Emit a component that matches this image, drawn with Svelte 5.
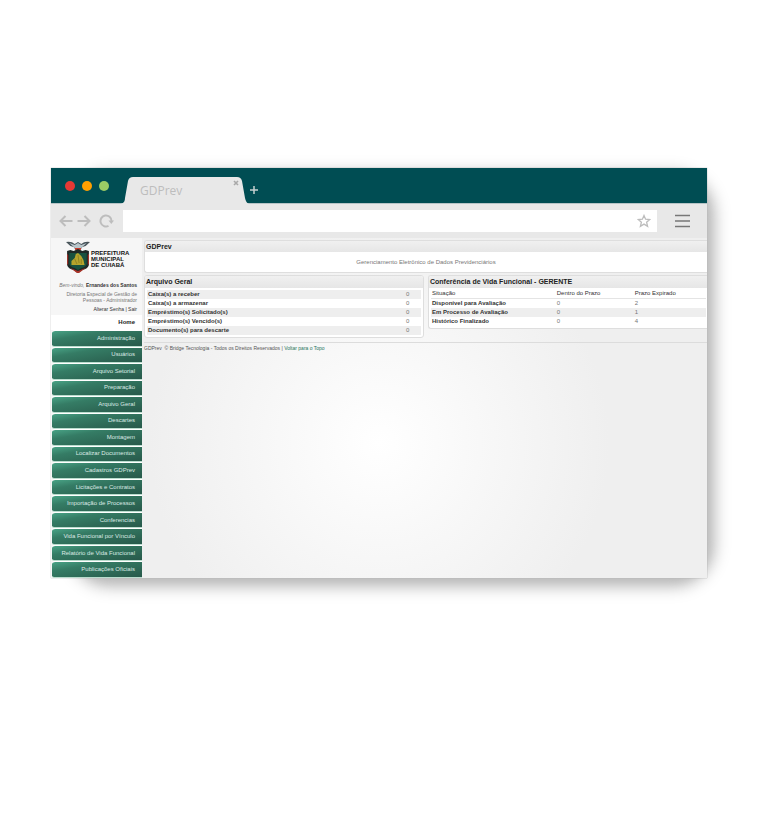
<script>
  const menu = ['Administração', 'Usuários', 'Arquivo Setorial', 'Preparação', 'Arquivo Geral', 'Descartes', 'Montagem', 'Localizar Documentos', 'Cadastros GDPrev', 'Licitações e Contratos', 'Importação de Processos', 'Conferencias', 'Vida Funcional por Vínculo', 'Relatório de Vida Funcional', 'Publicações Oficiais'];
  const files = [
    ['Caixa(s) a receber', 0],
    ['Caixa(s) a armazenar', 0],
    ['Empréstimo(s) Solicitado(s)', 0],
    ['Empréstimo(s) Vencido(s)', 0],
    ['Documento(s) para descarte', 0]
  ];
  const checks = [
    ['Disponível para Avaliação', 0, 2],
    ['Em Processo de Avaliação', 0, 1],
    ['Histórico Finalizado', 0, 4]
  ];
</script>

<div class="stage">
  <div class="window">
    <header class="titlebar">
      <div class="lights"><i class="red"></i><i class="orange"></i><i class="green"></i></div>
      <div class="tab">
        <svg class="shape" viewBox="0 0 128 27" preserveAspectRatio="none" aria-hidden="true"><path d="M0 27C3 26 4 24 4 21L7 4Q8 0 12 0H116Q120 0 121 4L124 21Q125 26 128 27Z" fill="#e8e8e8" /></svg>
        <span>GDPrev</span>
        <button class="close" aria-label="Fechar aba"><svg width="6" height="6" viewBox="0 0 6 6"><path d="M1 1 5 5M5 1 1 5" stroke="#a9a9a9" stroke-width="1.6" /></svg></button>
      </div>
      <button class="new" aria-label="Nova aba"><svg width="10" height="10" viewBox="0 0 10 10"><path d="M5 1V9M1 5H9" stroke="#c5d0d0" stroke-width="1.5" /></svg></button>
    </header>
    <div class="toolbar">
      <button aria-label="Voltar"><svg width="14" height="12" viewBox="0 0 14 12"><path d="M13.500 6H1.500M6.500 1 1.500 6 6.500 11" /></svg></button>
      <button aria-label="Avançar"><svg width="14" height="12" viewBox="0 0 14 12"><path d="M.5 6H12.500M7.500 1 12.500 6 7.500 11" /></svg></button>
      <button class="reload" aria-label="Recarregar"><svg width="15" height="14" viewBox="0 0 15 14"><path d="M9.500 11.900A5.500 5.500 0 1 1 12.500 7" /><path d="M9.500 6.500H15L12.300 10Z" /></svg></button>
      <div class="address">
        <input type="text" aria-label="Endereço" />
        <button class="star" aria-label="Favorito"><svg width="14" height="14" viewBox="0 0 14 14"><path d="M7 1.500 8.600 5.200 12.700 5.500 9.600 8.200 10.600 12.300 7 10.100 3.400 12.300 4.400 8.200 1.300 5.500 5.400 5.200Z" /></svg></button>
      </div>
      <button class="burger" aria-label="Menu"><svg width="15" height="14" viewBox="0 0 15 14"><path d="M0 1.500H15M0 7H15M0 12.500H15" /></svg></button>
    </div>
    <div class="page">
      <aside>
        <div class="brand">
          <svg width="24" height="32" viewBox="0 0 22 32" preserveAspectRatio="none" aria-hidden="true">
            <path d="M0 1Q5 0 8 3L11 1 14 3Q17 0 22 1L18 5 15 6 13 9H9L7 6 4 5Z" fill="#48545a" />
            <path d="M3 2 8 4 11 2 14 4 19 2 15 6 13 8H9L7 6Z" fill="#b9c6cb" />
            <path d="M8 7H14L13 10H9Z" fill="#c43b2d" />
            <path d="M1 10 4 9 7 10 11 8 15 10 18 9 21 10V24Q20 28 15 29L11 32 7 29Q2 28 1 24Z" fill="#1e2826" />
            <path d="M3 12H19V23Q18 26 14 27L11 29 8 27Q4 26 3 23Z" fill="#17513f" />
            <path d="M1 13 2 14V24L1 23ZM21 13 20 14V24L21 23ZM4 27 11 30 18 27 12 32H10Z" fill="#a93429" />
            <path d="M5 24V20L8 17 9 13 11 12 14 15 16 19 17 24Z" fill="#b5a42c" />
            <path d="M8 18 10 23M11 14 12 22M14 18V23" stroke="#82791f" stroke-width=".7" />
          </svg>
          <strong>PREFEITURA<br />MUNICIPAL<br />DE CUIABÁ</strong>
        </div>
        <div class="user">
          <p><em>Bem-vindo,</em> <b>Ernandes dos Santos</b></p>
          <p class="role">Diretoria Especial de Gestão de<br />Pessoas - Administrador</p>
          <p><a href="#senha">Alterar Senha</a> | <a href="#sair">Sair</a></p>
        </div>
        <a class="home" href="#home">Home</a>
        <nav>
          {#each menu as item}<a href="#menu">{item}</a>{/each}
        </nav>
      </aside>
      <main>
        <section class="panel flush intro">
          <h1>GDPrev</h1>
          <p>Gerenciamento Eletrônico de Dados Previdenciários</p>
        </section>
        <div class="columns">
          <section class="panel">
            <h2>Arquivo Geral</h2>
            <table class="files">
              <tbody>
                {#each files as [name, count]}<tr><th scope="row">{name}</th><td>{count}</td></tr>{/each}
              </tbody>
            </table>
          </section>
          <section class="panel flush">
            <h2>Conferência de Vida Funcional - GERENTE</h2>
            <table class="checks">
              <thead><tr><th scope="col">Situação</th><th scope="col">Dentro do Prazo</th><th scope="col">Prazo Expirado</th></tr></thead>
              <tbody>
                {#each checks as [name, inside, expired]}<tr><th scope="row">{name}</th><td>{inside}</td><td>{expired}</td></tr>{/each}
              </tbody>
            </table>
          </section>
        </div>
        <footer>GDPrev &nbsp;© Bridge Tecnologia - Todos os Direitos Reservados | <a href="#topo">Voltar para o Topo</a></footer>
      </main>
    </div>
  </div>
</div>

<style>
  :global(body) { margin: 0; background: #fff; }
  .stage { padding: 168px 67px 168px 51px; font-family: "Liberation Sans", Arial, sans-serif; overflow: hidden; }
  .window { position: relative; isolation: isolate; box-shadow: 0 0 1px #999; }
  .window::before { content: ""; position: absolute; z-index: -1; inset: 9px -3px -4px 22px; border-radius: 36px; background: #bbb; box-shadow: 0 0 14px 4px rgba(0, 0, 0, .3); filter: blur(4px); }
  button { border: 0; padding: 0; background: none; display: flex; }
  svg { display: block; }
  a { color: inherit; text-decoration: none; }
  p, h1, h2 { margin: 0; }

  .titlebar { height: 35px; background: #004d53; display: flex; align-items: flex-end; border-bottom: 1px solid #b7c4c6; }
  .lights { display: flex; gap: 7px; padding: 0 12px 12px 14px; }
  .lights i { width: 10px; height: 10px; border-radius: 50%; }
  .red { background: #e53935; }
  .orange { background: #ffa000; }
  .green { background: #9ccc65; }
  .tab { position: relative; isolation: isolate; width: 128px; height: 27px; margin-bottom: -1px; display: flex; justify-content: space-between; box-sizing: border-box; padding: 0 10px 0 19px; font: 12px/27px "Open Sans", sans-serif; color: #bdbdbd; }
  .shape { position: absolute; inset: 0; width: 100%; height: 100%; z-index: -1; }
  .close { margin-top: 3px; align-self: flex-start; }
  .new { margin-bottom: 8px; }

  .toolbar { height: 34px; background: #e8e8e8; display: flex; align-items: center; gap: 4px; padding-left: 8px; }
  .toolbar path { fill: none; stroke: #bdbdbd; stroke-width: 2; }
  .toolbar .reload { margin-left: 4px; }
  .toolbar .reload path + path { fill: #bdbdbd; stroke: none; }
  .toolbar .burger { margin: 0 17px 0 14px; }
  .toolbar .burger path { stroke: #777; stroke-width: 1.6; }
  .toolbar .star path { stroke-width: 1.3; }
  .address { flex: 1; height: 22px; margin-left: 5px; background: #fff; display: flex; align-items: center; padding-right: 6px; }
  .address input { flex: 1; min-width: 0; border: 0; background: none; outline: 0; }

  .page { display: flex; min-height: 340px; background: #efefef; }
  aside { flex: 0 0 91px; background: #f6f6f6; display: flex; flex-direction: column; }
  .brand { display: flex; align-items: center; gap: 1px; padding: 3px 0 0 15px; }
  .brand strong { font-size: 6px; line-height: 6px; color: #111; padding-top: 4px; }
  .user { padding: 9px 5px 3px 0; text-align: right; font-size: 5px; line-height: 6px; color: #333; display: flex; flex-direction: column; gap: 3px; white-space: nowrap; }
  .user em, .role { color: #777; }
  .home { background: #fff; text-align: right; padding-right: 7px; font-size: 6px; line-height: 15px; font-weight: bold; color: #222; }
  nav { flex: 1; display: grid; grid-auto-rows: 1fr; padding-left: 1px; }
  nav a { display: flex; align-items: center; justify-content: flex-end; padding-right: 7px; font-size: 6px; line-height: 7px; color: #dce9e4; white-space: nowrap; border-bottom: 1px solid #b9dccd; border-top: 1px solid #fff; background: linear-gradient(170deg, #49a386 0, #357c65 30%, #2f6d59 60%, #28594b 100%); border-radius: 3px 0 0 2px; background-clip: padding-box; }

  main { flex: 1; min-width: 0; padding: 2px 0 0 2px; background: radial-gradient(circle 230px at 42% 205px, #fff 0, #efefef 100%); }
  .panel { background: #fff; border: 1px solid #dedede; border-radius: 3px; box-sizing: border-box; overflow: hidden; }
  .flush { border-right: 0; border-radius: 3px 0 0 3px; }
  h1, h2 { font-size: 7px; line-height: 11px; padding-left: 1px; color: #222; background: linear-gradient(#f0f0f0, #e6e6e6); }
  h2 { padding-bottom: 1px; }
  .intro p { text-align: center; font-size: 6px; line-height: 20px; color: #777; }
  .columns { display: grid; grid-template-columns: 281fr 280fr; gap: 4px; align-items: start; margin-top: 2px; }
  table { border-collapse: collapse; table-layout: fixed; font-size: 6px; line-height: 9px; color: #333; }
  th, td { padding: 0 0 0 1px; text-align: left; }
  td { color: #777; }
  .files { width: calc(100% - 4px); margin: 2px; }
  .files td { width: 15px; }
  .files tr:nth-child(odd), .checks tbody tr:nth-child(even) { background: #eee; }
  .checks { width: calc(100% - 3px); margin: 1px 1px 2px 2px; }
  .checks thead th { font-weight: normal; border-bottom: 1px solid #e4e4e4; }
  .checks th:first-child { width: 45%; }
  .checks th:nth-child(2) { width: 28%; }
  footer { margin-top: 4px; border-top: 1px solid #dcdcdc; font-size: 5px; line-height: 11px; color: #555; }
  footer a { color: #28765d; }
</style>
